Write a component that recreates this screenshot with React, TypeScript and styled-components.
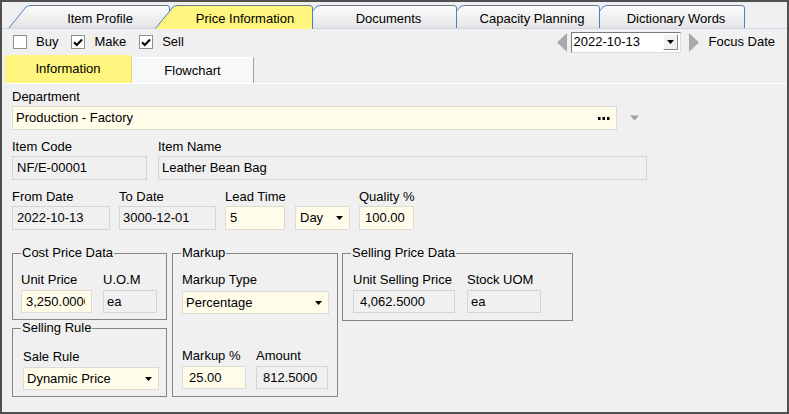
import React from "react";
import styled, { createGlobalStyle } from "styled-components";

const Global = createGlobalStyle`
  html, body { margin: 0; padding: 0; background: #f0f0f0; }
  body { font-family: "Liberation Sans", Arial, sans-serif; font-size: 13px; color: #000; }
  * { box-sizing: border-box; }
`;

const Frame = styled.div`
  width: 789px;
  height: 414px;
  border: 2px solid #505050;
  background: #f0f0f0;
  display: flex;
  flex-direction: column;
  overflow: hidden;
`;

/* ---------- top tab strip ---------- */
const TabStrip = styled.div`
  height: 27px;
  padding: 3px 0 0 6px;
  display: flex;
  align-items: flex-end;
  box-shadow: inset 0 -1px 0 #c9d6e6;
  flex-shrink: 0;
`;

const Tab = styled.div<{ $w: number; $first: boolean; $z: number }>`
  position: relative;
  width: ${(p) => p.$w}px;
  height: 24px;
  margin-left: ${(p) => (p.$first ? 0 : -15)}px;
  z-index: ${(p) => p.$z};
  flex-shrink: 0;
`;

const TabSvg = styled.svg`
  position: absolute;
  left: 0;
  top: 0;
`;

const TabLabel = styled.span`
  position: relative;
  display: block;
  padding: 6px 0 0 22px;
  line-height: 16px;
  text-align: center;
  white-space: nowrap;
`;

function TabShape({ w, selected, id }: { w: number; selected: boolean; id: string }) {
  const h = 24;
  const s = 20;
  const fill = selected ? "#fdf57d" : `url(#${id})`;
  return (
    <TabSvg width={w} height={h} viewBox={`0 0 ${w} ${h}`}>
      <defs>
        <linearGradient id={id} x1="0" y1="0" x2="0" y2="1">
          <stop offset="0" stopColor="#fcfcfc" />
          <stop offset="1" stopColor="#e4e4e4" />
        </linearGradient>
      </defs>
      <path
        d={`M0.5 ${h} L${s - 2} 2 Q${s} 0.5 ${s + 3} 0.5 L${w - 3} 0.5 Q${w - 0.5} 0.5 ${w - 0.5} 3 L${w - 0.5} ${h} Z`}
        fill={fill}
      />
      <path d={`M0.5 ${h - 0.5} L${s - 2} 2 Q${s} 0.5 ${s + 3} 0.5`} stroke="#4a80c8" fill="none" />
      <path d={`M${s + 3} 0.5 L${w - 3} 0.5`} stroke="#6f7c8c" fill="none" />
      <path d={`M${w - 3} 0.5 Q${w - 0.5} 0.5 ${w - 0.5} 3 L${w - 0.5} ${h}`} stroke="#4a80c8" fill="none" />
      {!selected && <path d={`M0 ${h - 0.5} L${w} ${h - 0.5}`} stroke="#c9d6e6" />}
    </TabSvg>
  );
}

const tabs = [
  { label: "Item Profile", w: 162, selected: false },
  { label: "Price Information", w: 158, selected: true },
  { label: "Documents", w: 159, selected: false },
  { label: "Capacity Planning", w: 158, selected: false },
  { label: "Dictionary Words", w: 160, selected: false },
];

/* ---------- toolbar ---------- */
const Toolbar = styled.div`
  height: 26px;
  display: flex;
  align-items: center;
  padding: 0 12px 0 11px;
  flex-shrink: 0;
`;

const CheckGroup = styled.div`
  display: flex;
  align-items: center;
  gap: 13px;
`;

const CheckItem = styled.label`
  display: flex;
  align-items: center;
  gap: 9px;
  line-height: 16px;
`;

const CheckBox = styled.span`
  width: 14px;
  height: 14px;
  border: 1px solid #8e8f8f;
  background: #fff;
  display: flex;
  align-items: center;
  justify-content: center;
`;

function Check({ label, checked }: { label: string; checked: boolean }) {
  return (
    <CheckItem>
      <CheckBox>
        {checked && (
          <svg width="10" height="9" viewBox="0 0 10 9">
            <path d="M1 4.2 L3.8 7 L9 1.5" stroke="#000" strokeWidth="2" fill="none" />
          </svg>
        )}
      </CheckBox>
      {label}
    </CheckItem>
  );
}

const DateNav = styled.div`
  margin-left: auto;
  display: flex;
  align-items: center;
`;

const NavArrowSvg = styled.svg<{ $ml: number; $mr: number }>`
  margin-left: ${(p) => p.$ml}px;
  margin-right: ${(p) => p.$mr}px;
`;

const DateCombo = styled.div`
  width: 110px;
  height: 21px;
  border: 1px solid;
  border-color: #7a7a7a #dcdcdc #dcdcdc #7a7a7a;
  background: #fff;
  display: flex;
  align-items: center;
  padding: 0 2px 0 2px;
`;

const DateText = styled.span`
  flex: 1;
  line-height: 16px;
`;

const DropBtn = styled.span`
  width: 15px;
  height: 16px;
  background: #f0f0f0;
  border: 1px solid;
  border-color: #fff #8a8a8a #8a8a8a #fff;
  display: flex;
  align-items: center;
  justify-content: center;
`;

const FocusLabel = styled.span`
  line-height: 16px;
`;

/* ---------- inner tabs ---------- */
const InnerTabs = styled.div`
  height: 28px;
  display: flex;
  align-items: flex-end;
  padding-left: 3px;
  flex-shrink: 0;
`;

const InnerTab = styled.div<{ $active: boolean; $w: number }>`
  width: ${(p) => p.$w}px;
  height: ${(p) => (p.$active ? 28 : 26)}px;
  background: ${(p) => (p.$active ? "#fdf57d" : "#f8f8f8")};
  border-radius: ${(p) => (p.$active ? "4px 4px 0 0" : "0")};
  border-top: 1px solid ${(p) => (p.$active ? "#fdf57d" : "#ffffff")};
  border-right: 1px solid ${(p) => (p.$active ? "#e0d98a" : "#a0a0a0")};
  display: flex;
  align-items: center;
  justify-content: center;
  padding-bottom: ${(p) => (p.$active ? 2 : 0)}px;
  line-height: 16px;
`;

/* ---------- content ---------- */
const Content = styled.div`
  flex: 1;
  margin-left: 3px;
  border-top: 1px solid #fff;
  padding: 5px 0 0 7px;
  display: flex;
  flex-direction: column;
  gap: 9px;
`;

const Row = styled.div<{ $gap: number }>`
  display: flex;
  align-items: flex-end;
  gap: ${(p) => p.$gap}px;
`;

const Field = styled.div<{ $w: number; $ml?: number }>`
  width: ${(p) => p.$w}px;
  margin-left: ${(p) => p.$ml ?? 0}px;
  display: flex;
  flex-direction: column;
  flex-shrink: 0;
`;

const Label = styled.span<{ $mb?: number }>`
  line-height: 16px;
  height: 16px;
  margin-bottom: ${(p) => p.$mb ?? 1}px;
  white-space: nowrap;
`;

const Box = styled.div<{ $cream?: boolean; $pl?: number; $h?: number }>`
  height: ${(p) => p.$h ?? 24}px;
  background: ${(p) => (p.$cream ? "#fffcea" : "#f0f0f0")};
  border: 1px solid ${(p) => (p.$cream ? "#dcdcd4" : "#d3d3d3")};
  padding: 0 6px 0 ${(p) => p.$pl ?? 3}px;
  display: flex;
  align-items: center;
  white-space: nowrap;
  overflow: hidden;
  line-height: 16px;
`;

const BoxText = styled.span`
  flex: 1;
  overflow: hidden;
`;

const ArrowSlot = styled.div`
  height: 24px;
  display: flex;
  align-items: center;
  margin-left: 2px;
`;

const GroupRow = styled.div`
  display: flex;
  align-items: stretch;
  margin-top: 6px;
`;

const LeftCol = styled.div`
  width: 155px;
  display: flex;
  flex-direction: column;
  margin-right: 5px;
`;

const Group = styled.fieldset<{ $w?: number; $pt: number; $pb: number; $pl: number; $top?: boolean; $mr?: number }>`
  margin: 0 ${(p) => p.$mr ?? 0}px 0 0;
  ${(p) => (p.$w ? `width: ${p.$w}px;` : "")}
  min-width: 0;
  border: 1px solid #858585;
  padding: ${(p) => p.$pt}px 6px ${(p) => p.$pb}px ${(p) => p.$pl}px;
  display: flex;
  flex-direction: column;
  ${(p) => (p.$top ? "align-self: flex-start;" : "")}
`;

const Legend = styled.legend<{ $pl: number }>`
  margin-left: ${(p) => 8 - p.$pl}px;
  padding: 0 1px;
  line-height: 16px;
  height: 16px;
`;

const PairRow = styled.div<{ $gap: number; $push?: boolean }>`
  display: flex;
  gap: ${(p) => p.$gap}px;
  ${(p) => (p.$push ? "margin-top: auto;" : "")}
`;

function Tri({ color = "#000", w = 7, h = 4 }: { color?: string; w?: number; h?: number }) {
  return (
    <svg width={w} height={h} viewBox={`0 0 ${w} ${h}`}>
      <path d={`M0 0 L${w} 0 L${w / 2} ${h} Z`} fill={color} />
    </svg>
  );
}

function Input({ label, w, value, cream, pl, h, mb }: { label?: string; w: number; value: string; cream?: boolean; pl?: number; h?: number; mb?: number }) {
  return (
    <Field $w={w}>
      {label !== undefined && <Label $mb={mb}>{label}</Label>}
      <Box $cream={cream} $pl={pl} $h={h}>
        <BoxText>{value}</BoxText>
      </Box>
    </Field>
  );
}

function Select({ label, w, value, h, mb, ml }: { label?: string; w: number; value: string; h?: number; mb?: number; ml?: number }) {
  return (
    <Field $w={w} $ml={ml}>
      {label !== undefined && <Label $mb={mb}>{label}</Label>}
      <Box $cream $pl={label === undefined ? 4 : 3} $h={h}>
        <BoxText>{value}</BoxText>
        <Tri />
      </Box>
    </Field>
  );
}

export default function App() {
  return (
    <>
      <Global />
      <Frame>
        <TabStrip>
          {tabs.map((t, i) => (
            <Tab key={t.label} $w={t.w} $first={i === 0} $z={t.selected ? 20 : 10 - i}>
              <TabShape w={t.w} selected={t.selected} id={`tg${i}`} />
              <TabLabel>{t.label}</TabLabel>
            </Tab>
          ))}
        </TabStrip>

        <Toolbar>
          <CheckGroup>
            <Check label="Buy" checked={false} />
            <Check label="Make" checked />
            <Check label="Sell" checked />
          </CheckGroup>
          <DateNav>
            <NavArrowSvg width="10" height="19" viewBox="0 0 10 19" $ml={0} $mr={4}>
              <path d="M10 0 L10 19 L0 9.5 Z" fill="#a9a9a9" />
            </NavArrowSvg>
            <DateCombo>
              <DateText>2022-10-13</DateText>
              <DropBtn>
                <Tri />
              </DropBtn>
            </DateCombo>
            <NavArrowSvg width="10" height="19" viewBox="0 0 10 19" $ml={8} $mr={10}>
              <path d="M0 0 L0 19 L10 9.5 Z" fill="#a9a9a9" />
            </NavArrowSvg>
            <FocusLabel>Focus Date</FocusLabel>
          </DateNav>
        </Toolbar>

        <InnerTabs>
          <InnerTab $active $w={127}>Information</InnerTab>
          <InnerTab $active={false} $w={122}>Flowchart</InnerTab>
        </InnerTabs>

        <Content>
          <Row $gap={0}>
            <Field $w={605}>
              <Label>Department</Label>
              <Box $cream $pl={3}>
                <BoxText>Production - Factory</BoxText>
                <svg width="12" height="3" viewBox="0 0 12 3">
                  <rect x="0" y="0" width="2.5" height="3" fill="#000" />
                  <rect x="4.5" y="0" width="2.5" height="3" fill="#000" />
                  <rect x="9" y="0" width="2.5" height="3" fill="#000" />
                </svg>
              </Box>
            </Field>
            <ArrowSlot>
              <svg width="30" height="6" viewBox="0 0 30 6">
                <path d="M11 0.5 L20 0.5 L15.5 5.5 Z" fill="#a0a0a0" />
              </svg>
            </ArrowSlot>
          </Row>

          <Row $gap={11}>
            <Input label="Item Code" w={135} value="NF/E-00001" pl={4} />
            <Input label="Item Name" w={489} value="Leather Bean Bag" pl={3} />
          </Row>

          <Row $gap={9}>
            <Input label="From Date" w={98} value="2022-10-13" pl={4} />
            <Input label="To Date" w={97} value="3000-12-01" pl={3} />
            <Input label="Lead Time" w={60} value="5" cream pl={4} />
            <Select w={55} value="Day" ml={1} />
            <Input label="Quality %" w={55} value="100.00" cream pl={5} />
          </Row>

          <GroupRow>
            <LeftCol>
              <Group $pt={11} $pb={6} $pl={8}>
                <Legend $pl={8}>Cost Price Data</Legend>
                <PairRow $gap={11}>
                  <Input label="Unit Price" w={71} value="3,250.0000" cream pl={4} h={23} mb={2} />
                  <Input label="U.O.M" w={54} value="ea" pl={3} h={23} mb={2} />
                </PairRow>
              </Group>
              <Group $pt={13} $pb={6} $pl={10}>
                <Legend $pl={10}>Selling Rule</Legend>
                <Select label="Sale Rule" w={136} value="Dynamic Price" h={23} mb={2} />
              </Group>
            </LeftCol>

            <Group $w={166} $pt={11} $pb={7} $pl={9} $mr={4}>
              <Legend $pl={9}>Markup</Legend>
              <Select label="Markup Type" w={147} value="Percentage" h={23} mb={3} />
              <PairRow $gap={10} $push>
                <Input label="Markup %" w={64} value="25.00" cream pl={6} h={23} mb={2} />
                <Input label="Amount" w={72} value="812.5000" pl={6} h={23} mb={2} />
              </PairRow>
            </Group>

            <Group $w={231} $pt={11} $pb={7} $pl={10} $top>
              <Legend $pl={10}>Selling Price Data</Legend>
              <PairRow $gap={12}>
                <Input label="Unit Selling Price" w={102} value="4,062.5000" pl={6} h={23} mb={2} />
                <Input label="Stock UOM" w={74} value="ea" pl={3} h={23} mb={2} />
              </PairRow>
            </Group>
          </GroupRow>
        </Content>
      </Frame>
    </>
  );
}
